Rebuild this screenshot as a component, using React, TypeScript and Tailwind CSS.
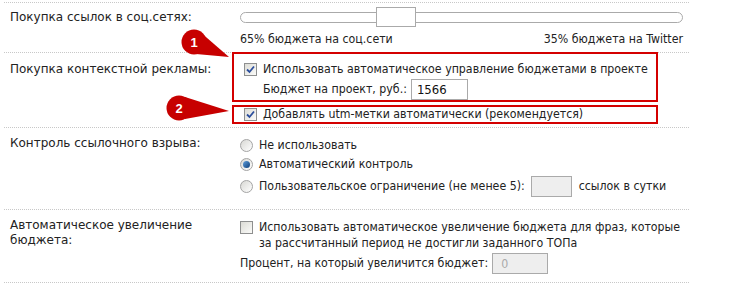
import React from 'react';

function Check({ checked }: { checked?: boolean }) {
  return (
    <span className="inline-flex items-center justify-center w-[13px] h-[13px] shrink-0 border border-[#8e8f8f] bg-gradient-to-br from-[#dcdcd6] to-[#fbfbf9]">
      {checked && (
        <svg width="9" height="9" viewBox="0 0 9 9">
          <path d="M1 4.5 L3.5 7 L8 1.5" fill="none" stroke="#2b4e9c" strokeWidth="1.8" />
        </svg>
      )}
    </span>
  );
}

function Radio({ checked }: { checked?: boolean }) {
  return (
    <span className="inline-flex items-center justify-center w-[13px] h-[13px] shrink-0 rounded-full border border-[#a4a4a4] bg-gradient-to-br from-[#d8d8d4] to-[#ffffff]">
      {checked && <span className="w-[7px] h-[7px] rounded-full bg-gradient-to-br from-[#5f9fdc] to-[#0d3f7a]" />}
    </span>
  );
}

function Badge({ cx, cy, tail, n }: { cx: number; cy: number; tail: string; n: string }) {
  return (
    <>
      <polygon points={tail} fill="#c70000" />
      <circle cx={cx} cy={cy} r="12.5" fill="#c70000" />
      <text x={cx} y={cy + 5} textAnchor="middle" fill="#fff" fontSize="13" fontWeight="bold" fontFamily="'Liberation Sans', sans-serif">
        {n}
      </text>
    </>
  );
}

export default function App() {
  return (
    <div className="relative w-[744px] h-[287px] bg-white text-[12px] leading-[15px] text-[#222] font-['DejaVu_Sans',_Verdana,_sans-serif] pt-[2px]">
      <div className="ml-[4px] w-[685px]">
        {/* Social links */}
        <div className="grid grid-cols-[236px_1fr] border-t border-dotted border-[#c8c8c8] h-[50px]">
          <div className="pl-[6px] pt-[7px]">Покупка ссылок в соц.сетях:</div>
          <div className="pt-[4px] pr-[6px] font-['DejaVu_Sans_Condensed',_Tahoma,_sans-serif] text-[12.25px] whitespace-nowrap">
            <div className="relative h-[20px] flex items-center">
              <div className="w-full h-[11px] rounded-full border border-[#aaa] bg-white" />
              <div className="absolute left-[136px] top-0 w-[40px] h-[20px] border border-[#aaa] bg-white" />
            </div>
            <div className="flex justify-between mt-[5px]">
              <span>65% бюджета на соц.сети</span>
              <span>35% бюджета на Twitter</span>
            </div>
          </div>
        </div>

        {/* Context ads */}
        <div className="grid grid-cols-[236px_1fr] border-t border-dotted border-[#c8c8c8] h-[75px]">
          <div className="pl-[6px] pt-[9px]">Покупка контекстной рекламы:</div>
          <div className="-ml-[8px] -mt-[1px] font-['DejaVu_Sans_Condensed',_Tahoma,_sans-serif] text-[12.25px] whitespace-nowrap">
            <div className="w-[426px] border-2 border-[#d40000] pl-[10px] pt-[8px]">
              <label className="flex items-center gap-[6px]">
                <Check checked />
                <span>Использовать автоматическое управление бюджетами в проекте</span>
              </label>
              <div className="flex items-center gap-[4px] pl-[19px] mt-[2px]">
                <span>Бюджет на проект, руб.:</span>
                <input
                  readOnly
                  value="1566"
                  className="w-[57px] h-[21px] border border-[#aaa] bg-white pl-[5px] text-[13px] text-[#111] outline-none"
                />
              </div>
            </div>
            <div className="w-[426px] border-2 border-[#d40000] pl-[10px] mt-[3px] h-[19px] flex items-center">
              <label className="flex items-center gap-[6px]">
                <Check checked />
                <span>Добавлять utm-метки автоматически (рекомендуется)</span>
              </label>
            </div>
          </div>
        </div>

        {/* Link explosion */}
        <div className="grid grid-cols-[236px_1fr] border-t border-dotted border-[#c8c8c8] h-[82px]">
          <div className="pl-[6px] pt-[8px]">Контроль ссылочного взрыва:</div>
          <div className="pt-[9px] flex flex-col font-['DejaVu_Sans_Condensed',_Tahoma,_sans-serif] text-[12.25px] whitespace-nowrap">
            <label className="flex items-center gap-[6px] h-[16px]">
              <Radio />
              <span>Не использовать</span>
            </label>
            <label className="flex items-center gap-[6px] h-[16px] mt-[3px]">
              <Radio checked />
              <span>Автоматический контроль</span>
            </label>
            <label className="flex items-center gap-[6px] mt-[4px]">
              <Radio />
              <span>Пользовательское ограничение (не менее 5):</span>
              <input readOnly className="w-[41px] h-[21px] border border-[#aaa] bg-[#eee] outline-none" />
              <span className="ml-[1px]">ссылок в сутки</span>
            </label>
          </div>
        </div>

        {/* Budget increase */}
        <div className="grid grid-cols-[236px_1fr] border-y border-dotted border-[#c8c8c8] h-[74px]">
          <div className="pl-[6px] pt-[8px] leading-[15px]">
            Автоматическое увеличение
            <br />
            бюджета:
          </div>
          <div className="pt-[9px] font-['DejaVu_Sans_Condensed',_Tahoma,_sans-serif] text-[12.25px] whitespace-nowrap">
            <label className="flex items-start gap-[6px]">
              <span className="pt-[2px]">
                <Check />
              </span>
              <span className="leading-[16px]">
                Использовать автоматическое увеличение бюджета для фраз, которые
                <br />
                за рассчитанный период не достигли заданного ТОПа
              </span>
            </label>
            <div className="flex items-center gap-[4px] mt-[2px]">
              <span>Процент, на который увеличится бюджет:</span>
              <input
                readOnly
                value="0"
                className="w-[56px] h-[21px] border border-[#aaa] bg-[#eee] pl-[8px] text-[#aaa] outline-none"
              />
            </div>
          </div>
        </div>
      </div>

      {/* Callout badges */}
      <svg className="absolute left-0 top-0 pointer-events-none" width="744" height="287">
        <Badge cx={194} cy={42} n="1" tail="199,31 196,54 229,57" />
        <Badge cx={179} cy={108} n="2" tail="185,97 185,119 229,111" />
      </svg>
    </div>
  );
}
